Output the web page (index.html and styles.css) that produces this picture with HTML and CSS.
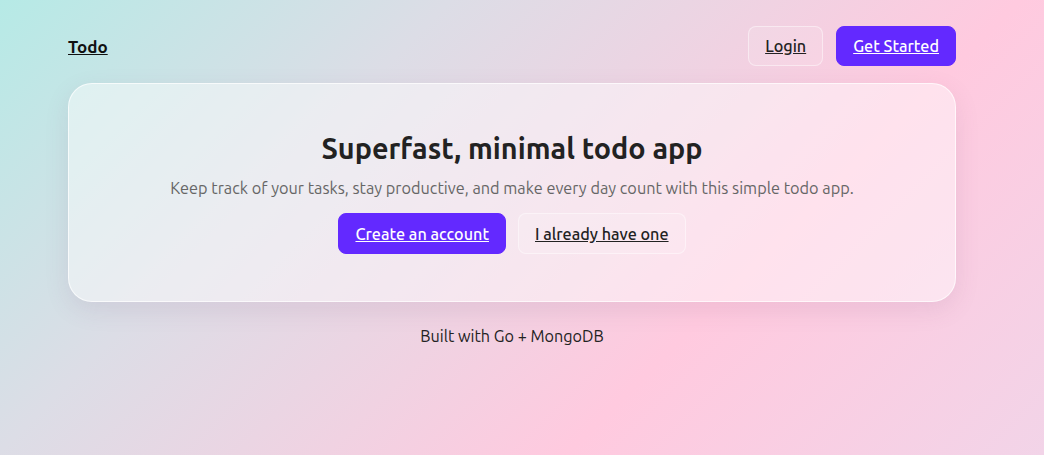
FILE: index.html
```html
<!DOCTYPE html>
<html lang="en">
<head>
<meta charset="utf-8">
<title>Todo</title>
<link rel="stylesheet" href="styles.css">
</head>
<body>
<div class="page">
  <nav class="nav">
    <a class="brand" href="#">Todo</a>
    <div class="nav-actions">
      <a class="btn btn-ghost" href="#">Login</a>
      <a class="btn btn-primary" href="#">Get Started</a>
    </div>
  </nav>
  <main class="card">
    <h1 class="title">Superfast, minimal todo app</h1>
    <p class="subtitle">Keep track of your tasks, stay productive, and make every day count with this simple todo app.</p>
    <div class="cta">
      <a class="btn btn-primary" href="#">Create an account</a>
      <a class="btn btn-ghost" href="#">I already have one</a>
    </div>
  </main>
  <footer class="footer">Built with Go + MongoDB</footer>
</div>
</body>
</html>
```
FILE: styles.css
```css
* { box-sizing: border-box; }
html, body { margin: 0; height: 100%; }
body {
  font-family: "Ubuntu", "Noto Sans", "Open Sans", sans-serif;
  color: #222;
  background: linear-gradient(135deg, #b6eae6 0%, #dcdde6 30%, #ffcadf 68%, #f2d4e8 100%);
  min-height: 455px;
}
.page {
  width: 888px;
  margin-left: 68px;
  padding-top: 26px;
}
.nav {
  display: flex;
  justify-content: space-between;
  align-items: center;
  height: 40px;
}
.brand {
  font-weight: 700;
  font-size: 17px;
  color: #111;
}
.nav-actions {
  display: flex;
  gap: 13px;
}
.btn {
  display: inline-flex;
  align-items: center;
  justify-content: center;
  height: 40px;
  padding: 0 16px;
  border-radius: 8px;
  font-size: 16.2px;
  font-weight: 500;
  color: #222;
  border: 1px solid rgba(255, 255, 255, 0.45);
}
.btn-ghost {
  background: rgba(255, 255, 255, 0.12);
}
.btn-primary {
  background: #6329ff;
  border-color: #6329ff;
  color: #fff;
}
.card {
  margin-top: 17px;
  height: 219px;
  padding: 46px 24px 0;
  border-radius: 24px;
  background: rgba(255, 255, 255, 0.45);
  border: 1px solid rgba(255, 255, 255, 0.7);
  box-shadow: 0 8px 24px rgba(120, 80, 120, 0.12);
  text-align: center;
}
.title {
  margin: 0;
  font-size: 28.8px;
  font-weight: 600;
  line-height: 36px;
  color: #222;
}
.subtitle {
  margin: 10px 0 0;
  font-size: 16.3px;
  line-height: 24px;
  color: #666;
}
.cta {
  margin-top: 13px;
  display: flex;
  justify-content: center;
  gap: 12px;
}
.cta .btn { height: 41px; padding: 0 16px; }
.footer {
  margin-top: 22px;
  text-align: center;
  font-size: 16.2px;
  line-height: 24px;
  color: #222;
}
```
